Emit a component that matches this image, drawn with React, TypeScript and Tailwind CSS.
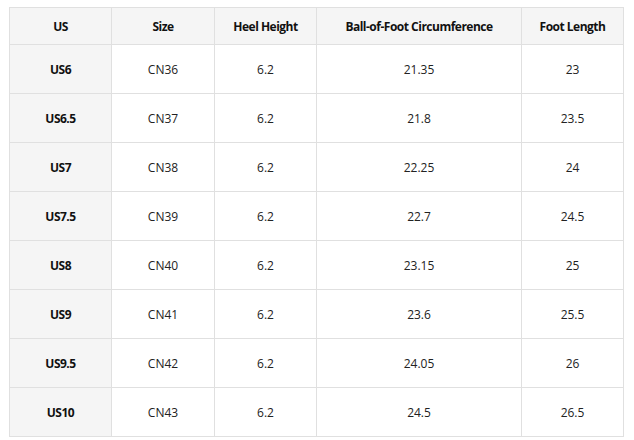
const HEAD = ["US", "Size", "Heel Height", "Ball-of-Foot Circumference", "Foot Length"];

const ROWS: string[][] = [
  ["US6", "CN36", "6.2", "21.35", "23"],
  ["US6.5", "CN37", "6.2", "21.8", "23.5"],
  ["US7", "CN38", "6.2", "22.25", "24"],
  ["US7.5", "CN39", "6.2", "22.7", "24.5"],
  ["US8", "CN40", "6.2", "23.15", "25"],
  ["US9", "CN41", "6.2", "23.6", "25.5"],
  ["US9.5", "CN42", "6.2", "24.05", "26"],
  ["US10", "CN43", "6.2", "24.5", "26.5"],
];

export default function App() {
  return (
    <div
      className="w-[634px] h-[440px] bg-white pl-[9px] pt-[7px]"
      style={{ fontFamily: '"Open Sans", "Noto Sans", sans-serif' }}
    >
      <table className="w-[614px] table-fixed border-collapse text-[12px] text-[#222]">
        <colgroup>
          <col className="w-[102px]" />
          <col className="w-[103px]" />
          <col className="w-[102px]" />
          <col className="w-[205px]" />
          <col className="w-[102px]" />
        </colgroup>
        <thead>
          <tr className="h-[37px] bg-[#f5f5f5]">
            {HEAD.map((h) => (
              <th
                key={h}
                className="border border-[#e0e0e0] pt-[2px] font-bold tracking-[-0.5px] text-[#111] text-center align-middle"
              >
                {h}
              </th>
            ))}
          </tr>
        </thead>
        <tbody>
          {ROWS.map((r) => (
            <tr key={r[0]} className="h-[49px]">
              {r.map((c, i) => (
                <td
                  key={i}
                  className={
                    i === 0
                      ? "border border-[#e0e0e0] bg-[#f5f5f5] pt-[2px] font-bold tracking-[-0.5px] text-[#111] text-center"
                      : "border border-[#e0e0e0] pt-[2px] text-center"
                  }
                >
                  {c}
                </td>
              ))}
            </tr>
          ))}
        </tbody>
      </table>
    </div>
  );
}
